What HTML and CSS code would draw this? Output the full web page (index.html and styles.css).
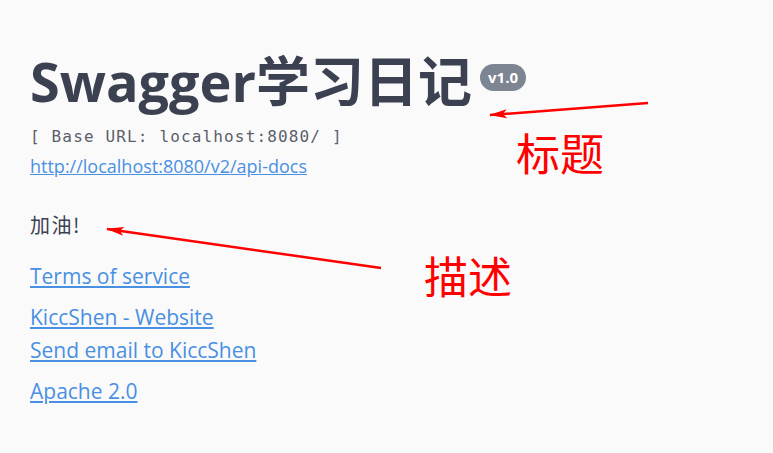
FILE: index.html
```html
<!DOCTYPE html>
<html>
<head>
<meta charset="utf-8">
<link rel="stylesheet" href="styles.css">
</head>
<body>
<div class="info">
  <hgroup class="main">
    <h2 class="title">Swagger学习日记<span class="version">v1.0</span></h2>
    <pre class="base-url">[ Base URL: localhost:8080/ ]</pre>
    <a class="spec-link" href="#">http://localhost:8080/v2/api-docs</a>
  </hgroup>
  <div class="description">加油!</div>
  <div class="links">
    <a href="#" class="terms">Terms of service</a>
    <div class="contact">
      <a href="#">KiccShen - Website</a>
      <a href="#">Send email to KiccShen</a>
    </div>
    <a href="#" class="license">Apache 2.0</a>
  </div>
</div>
<svg class="notes" width="773" height="453" viewBox="0 0 773 453">
  <defs>
    <marker id="ah" markerWidth="18" markerHeight="12" refX="17" refY="6" orient="auto" markerUnits="userSpaceOnUse">
      <path d="M0,1.5 L18,6 L0,10.5 L4,6 Z" fill="#ff0000"/>
    </marker>
  </defs>
  <line x1="648" y1="103" x2="490" y2="115" stroke="#ff0000" stroke-width="2.5" marker-end="url(#ah)"/>
  <line x1="381" y1="268" x2="107" y2="229" stroke="#ff0000" stroke-width="2.5" marker-end="url(#ah)"/>
  <text x="516" y="171" class="note">标题</text>
  <text x="424" y="294" class="note">描述</text>
</svg>
</body>
</html>
```

FILE: styles.css
```css
html, body {
  margin: 0;
  padding: 0;
  background: #fafafa;
}
body {
  font-family: "Open Sans", "Noto Sans CJK SC", sans-serif;
  color: #3b4151;
  width: 773px;
  height: 453px;
  overflow: hidden;
  position: relative;
}
.info {
  padding: 50px 30px 0;
}
.main {
  margin: 0;
  display: block;
}
.title {
  margin: 0;
  font-size: 54px;
  font-weight: 700;
  line-height: 62px;
  color: #3b4151;
  display: flex;
  align-items: flex-start;
}
.version {
  display: inline-block;
  margin-left: 8px;
  margin-top: 14px;
  background: #7d8492;
  color: #fff;
  font-family: "Open Sans", sans-serif;
  font-size: 15px;
  font-weight: 700;
  line-height: 27px;
  padding: 0 8px;
  border-radius: 57px;
}
.base-url {
  margin: 14px 0 0;
  font-family: "DejaVu Sans Mono", monospace;
  font-size: 16px;
  letter-spacing: 1.15px;
  line-height: 22px;
  color: #5a5f6a;
}
.spec-link {
  display: inline-block;
  margin-top: 6px;
  font-size: 18px;
  line-height: 24px;
  color: #4990e2;
}
.description {
  margin-top: 33px;
  font-family: "Noto Sans CJK SC", sans-serif;
  font-size: 20px;
  line-height: 28px;
  letter-spacing: 1.5px;
}
.links {
  margin-top: 23px;
  display: flex;
  flex-direction: column;
  align-items: flex-start;
  gap: 10px;
}
.links a {
  font-size: 21px;
  color: #4990e2;
  line-height: 29px;
}
.contact {
  display: flex;
  flex-direction: column;
  align-items: flex-start;
}
.contact a {
  line-height: 33px;
}
.notes {
  position: absolute;
  left: 0;
  top: 0;
}
.note {
  font-family: "Noto Sans CJK SC", sans-serif;
  font-size: 44px;
  fill: #ff0000;
}
```
